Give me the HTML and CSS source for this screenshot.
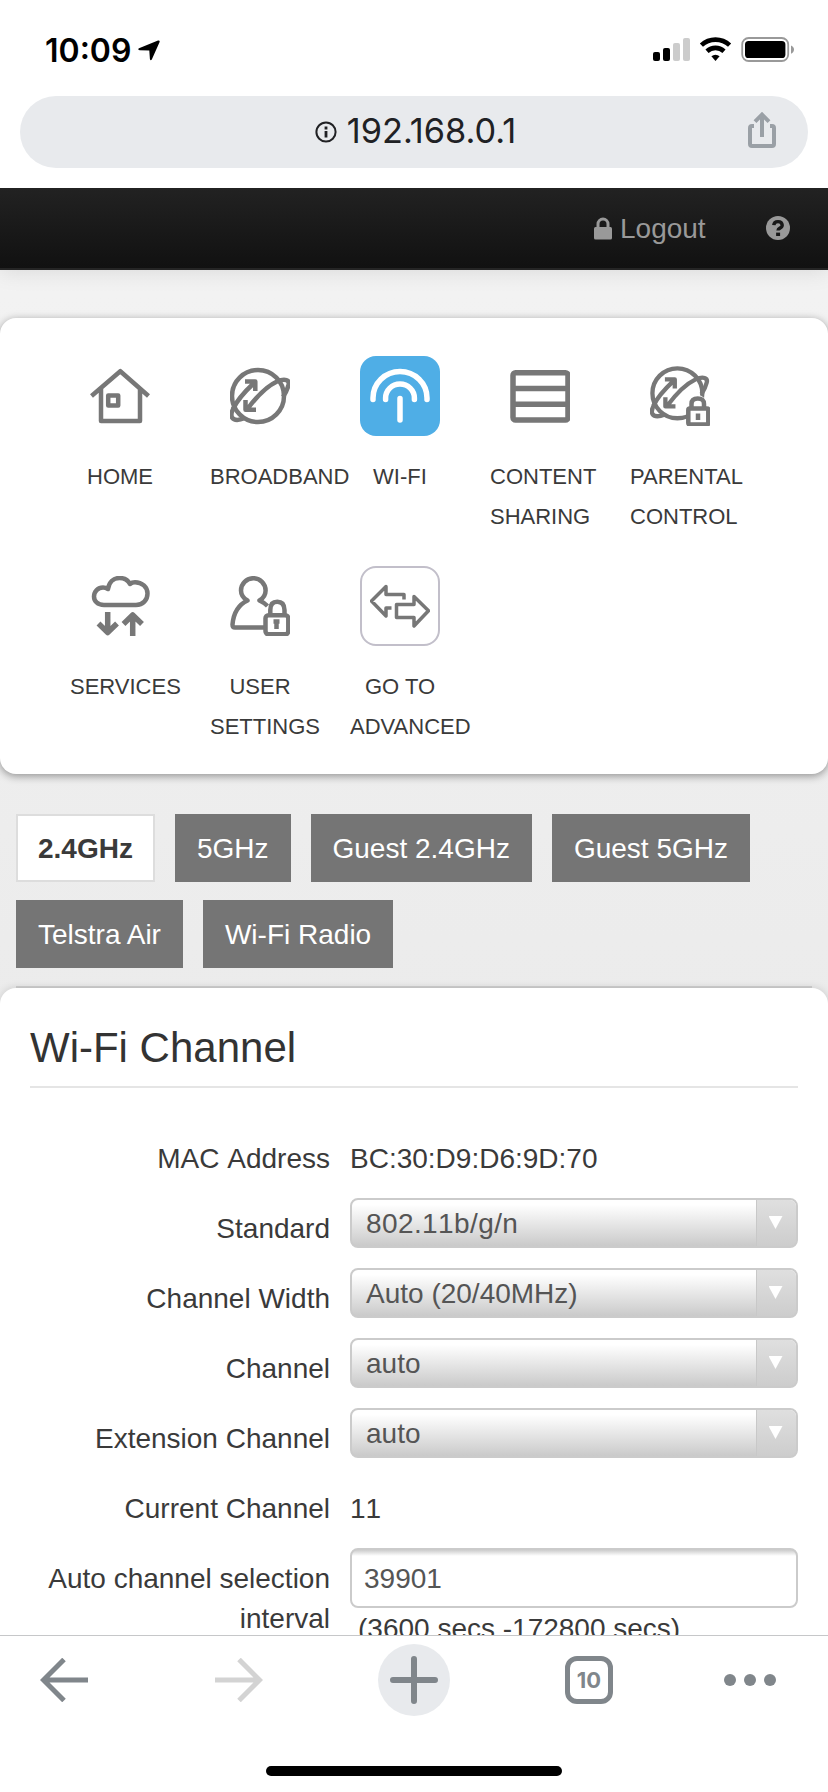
FILE: index.html
```
<!DOCTYPE html>
<html lang="en">
<head>
  <meta charset="UTF-8" />
  <title>Wi-Fi Channel</title>
  <meta name="viewport" content="width=device-width, initial-scale=1.0" />
  <link rel="stylesheet" href="styles.css">
</head>
<body>

  <header class="browser-top">
    <div class="status">
      <span class="time">10:09</span>
      <svg class="location" width="22" height="21" viewBox="0 0 22 21"><path d="M1 8.2 20 .5Q22.200 .1 21.500 2.200L13.800 19.400Q12.500 21.200 11.900 19L11.300 10.400 1.600 10.200Q-.8 9.400 1 8.200Z" /></svg>
      <svg class="signal" width="142" height="26" viewBox="0 0 142 26">
        <rect x="0" y="15" width="7" height="9" rx="2" />
        <rect x="10" y="11" width="7" height="13" rx="2" />
        <rect x="20" y="6" width="7" height="18" rx="2" fill="#ccc" />
        <rect x="30" y="1" width="7" height="23" rx="2" fill="#ccc" />
        <g fill="none" stroke="#000" stroke-width="4.6">
          <path d="M48.400 8.200a20.500 20.500 0 0 1 28.200 0" />
          <path d="M54 14.200a12.500 12.500 0 0 1 17 0" />
        </g>
        <path d="M58.400 19.200a6.200 6.200 0 0 1 8.200 0L62.500 24Z" />
        <rect x="89.200" y="1" width="46" height="23" rx="6.500" fill="none" stroke="#999" stroke-width="1.8" />
        <rect x="92" y="4" width="40.400" height="17" rx="3.600" />
        <path d="M138 8.400q3 1.300 3 4.200t-3 4.200Z" fill="#999" />
      </svg>
    </div>
    <div class="address">
      <span></span>
      <span class="url">
        <svg width="22" height="22" viewBox="0 0 22 22">
          <circle cx="11" cy="11" r="9.600" fill="none" stroke="#202124" stroke-width="2" />
          <path d="M9.600 10h2.800v6.400H9.600ZM9.600 5.600h2.800v2.800H9.600Z" fill="#202124" />
        </svg>
        <span>192.168.0.1</span>
      </span>
      <svg class="share" width="28" height="36" viewBox="0 0 28 36">
        <path d="M6 14H4Q2 14 2 16V32Q2 34 4 34H24Q26 34 26 32V16Q26 14 24 14H22M14 25V4M7 9.600 14 2.600 21 9.600" />
      </svg>
    </div>
  </header>

  <main>
    <div class="topbar">
      <svg width="18" height="23" viewBox="0 0 18 23">
        <path d="M4 11V7a5 5 0 0 1 10 0v4" fill="none" stroke="#999" stroke-width="3" />
        <rect x="0" y="10" width="18" height="12.400" rx="1.500" fill="#999" />
      </svg>
      <a class="logout">Logout</a>
      <svg class="help" width="24" height="24" viewBox="0 0 24 24">
        <circle cx="12" cy="12" r="12" fill="#999" />
        <path d="M7.800 9.200Q8 5.600 12 5.600T16.200 9.200Q16.200 11 13.900 12.100 12 13 12 14.600" fill="none" stroke="#181818" stroke-width="3.400" />
        <path d="M10.100 16.600h4v3.400h-4Z" fill="#181818" />
      </svg>
    </div>

    <nav class="menu">
      <a class="item">
        <span class="icon"><svg viewBox="0 0 60 60">
          <path d="M1.500 30 30.300 5.200 58.500 30M11 23V55H50V23" />
          <rect x="18.200" y="29.600" width="10" height="10" />
        </svg></span>
        Home
      </a>
      <a class="item">
        <span class="icon"><svg viewBox="0 0 60 60">
          <use href="#globe" />
        </svg></span>
        Broadband
      </a>
      <a class="item">
        <span class="icon active"><svg viewBox="0 0 60 60">
          <path d="M3 33.500V32A27 26.500 0 0 1 57 32V33.500M15.600 33.500V32A14.400 14 0 0 1 44.400 32V33.500M30 32.500V54" />
        </svg></span>
        Wi-Fi
      </a>
      <a class="item">
        <span class="icon"><svg viewBox="0 0 60 60">
          <rect class="thick" x="3" y="6.800" width="55" height="47.200" rx="2.500" />
          <path class="thick" d="M3 22.600H58M3 38.200H58" />
        </svg></span>
        Content Sharing
      </a>
      <a class="item">
        <span class="icon"><svg viewBox="0 0 60 60">
          <use href="#globe" transform="translate(.5 -1.500) scale(.96)" />
          <path d="M37 41H41V33Q48 25 55 33V41H60V60H37Z" fill="#fff" stroke="none" />
          <path d="M41.500 42V38Q41.500 32.500 47.800 32.500T54 38V42" />
          <rect x="38.300" y="42.400" width="20" height="16" rx="1.500" />
          <path d="M48 47.500V54" />
        </svg></span>
        Parental Control
      </a>
      <a class="item">
        <span class="icon"><svg viewBox="0 0 60 60">
          <path d="M14 29C7.500 29 4 25 4 20.500 4 15.500 8 11.500 13 11.500Q15.500 11.500 18 13C19 6 23.500 2 29.500 2Q37 2 40 8Q42 6.200 45 6.200C52 6.200 57.500 11 57.500 17.500S53 29 46 29Z" />
          <path class="thick" d="M17.700 36V56M8.500 47.500 17.700 56.500 27 47.500M42.700 60V40M33.500 48 42.700 39 52 48" />
        </svg></span>
        Services
      </a>
      <a class="item">
        <span class="icon"><svg viewBox="0 0 60 60">
          <path d="M36 51.500H5Q2.500 51.500 2.500 48.500C3.500 37 8 29 17.500 24.500 13 22 11 18.500 11 14.500A12.300 12.300 0 0 1 35.600 14.500C35.600 18.500 33.500 22 29.500 24.500Q34 26.500 37.500 30" />
          <path d="M38 38V31Q39 25 47 25T56 31V38Z" fill="#fff" stroke="none" />
          <path d="M40.300 38V34Q40.300 25.800 47.300 25.800T54.500 34V38" />
          <rect x="35.500" y="39.300" width="22.800" height="18.900" rx="3" fill="#fff" />
          <path d="M46.500 44V53M43.500 45.500H49.500" />
        </svg></span>
        User Settings
      </a>
      <a class="item">
        <span class="icon outlined"><svg viewBox="0 0 60 60">
          <path class="thin" d="M34 23.500V18.500H16V10.500L1.500 25 16 40V32H21.500M26.500 28.500H44V20.500L58.500 34.700 44 50V41.500H26.500Z" />
        </svg></span>
        Go to Advanced
      </a>
    </nav>

    <ul class="tabs">
      <li class="current">2.4GHz</li>
      <li>5GHz</li>
      <li>Guest 2.4GHz</li>
      <li>Guest 5GHz</li>
      <li>Telstra Air</li>
      <li>Wi-Fi Radio</li>
    </ul>
    <div class="tabs-line"></div>

    <section class="panel">
      <h2>Wi-Fi Channel</h2>
      <dl>
        <dt>MAC Address</dt>
        <dd class="plain">BC:30:D9:D6:9D:70</dd>
        <dt>Standard</dt>
        <dd><div class="select standard">802.11b/g/n<i></i></div></dd>
        <dt>Channel Width</dt>
        <dd><div class="select">Auto (20/40MHz)<i></i></div></dd>
        <dt>Channel</dt>
        <dd><div class="select">auto<i></i></div></dd>
        <dt>Extension Channel</dt>
        <dd><div class="select">auto<i></i></div></dd>
        <dt>Current Channel</dt>
        <dd class="plain">11</dd>
        <dt>Auto channel selection interval</dt>
        <dd>
          <div class="input">39901</div>
          <div class="hint">(3600 secs -172800 secs)</div>
        </dd>
      </dl>
    </section>
  </main>

  <footer class="browser-bottom">
    <div class="tools">
      <svg width="48" height="44" viewBox="0 0 48 44"><path d="M48 22H4M24 1.500 3.500 22 24 42.500" fill="none" stroke="#80868b" stroke-width="5" /></svg>
      <svg width="48" height="44" viewBox="0 0 48 44"><path d="M0 22H44M24 1.500 44.500 22 24 42.500" fill="none" stroke="#d3d3d3" stroke-width="5" /></svg>
      <svg width="72" height="72" viewBox="0 0 72 72">
        <circle cx="36" cy="36" r="36" fill="#e8eaed" />
        <path d="M15 36H57M36 15V57" stroke="#80868b" stroke-width="6" stroke-linecap="round" />
      </svg>
      <span class="count">10</span>
      <svg width="52" height="12" viewBox="0 0 52 12" fill="#80868b"><circle cx="6" cy="6" r="6" /><circle cx="26" cy="6" r="6" /><circle cx="46" cy="6" r="6" /></svg>
    </div>
    <div class="home-bar"></div>
  </footer>

  <!-- shared by Broadband and Parental Control -->
  <svg class="defs" width="0" height="0">
    <defs>
      <g id="globe">
        <circle cx="28" cy="30" r="26" />
        <path d="M3 43Q8 32 24 17M15 15.500H25.300V25" />
        <path d="M17 43.500Q33 22 47 15.500C55 12 60 14 58.500 19Q57 25 53 31M15.500 34V43.700H26" />
        <path d="M5 40Q0 47 2 51.500 5 56 15 52" />
      </g>
    </defs>
  </svg>

</body>
</html>
```
FILE: styles.css
```
* {
  box-sizing: border-box;
}

body {
  display: flex;
  flex-direction: column;
  height: 1792px;
  margin: 0;
  overflow: hidden;
  background: #fff;
  color: #3a3a3a;
  font: 28px/40px "Liberation Sans", Arial, sans-serif;
}

svg {
  display: block;
  flex: none;
}

.defs {
  position: absolute;
}

/* browser */
.browser-top {
  height: 188px;
  flex: none;
}

.status {
  display: flex;
  align-items: center;
  height: 96px;
  padding: 4px 33px 0 45px;
  color: #000;
}

.time {
  padding-top: 1px;
  font: 600 32px/40px Inter, sans-serif;
}

.location {
  margin-left: 7px;
}

.signal {
  margin-left: auto;
}

.address {
  display: grid;
  grid-template-columns: 60px 1fr 60px;
  align-items: center;
  height: 72px;
  margin: 0 20px;
  border-radius: 36px;
  background: #e8eaed;
}

.url {
  display: flex;
  justify-content: center;
  align-items: center;
  gap: 10px;
  padding-left: 3px;
  color: #202124;
  font: 400 34.300px/40px Inter, sans-serif;

  span {
    padding-bottom: 2px;
  }
}

.share {
  margin-bottom: 5px;
  fill: none;
  stroke: #9aa0a6;
  stroke-width: 4;
}

.browser-bottom {
  flex: none;
  height: 157px;
  border-top: 1px solid #c6c7c9;
  background: #fff;
}

.tools {
  display: grid;
  grid-template-columns: 128px 222px 128px 222px 100px;
  justify-items: center;
  align-items: center;
  height: 88px;
}

.count {
  width: 48px;
  height: 48px;
  border: 5px solid #80868b;
  border-radius: 12px;
  color: #80868b;
  font: 700 22px/38px Inter, sans-serif;
  text-align: center;
}

.home-bar {
  width: 296px;
  height: 10px;
  margin: 42px auto 0;
  border-radius: 5px;
  background: #000;
}

/* router page */
main {
  flex: 1;
  min-height: 0;
  overflow: hidden;
  background: linear-gradient(#f3f3f3, #ececec 750px, #e8e8e8);
}

.topbar {
  display: flex;
  align-items: center;
  height: 82px;
  padding: 0 38px 0 594px;
  border-bottom: 2px solid #252525;
  background: linear-gradient(#222, #111);
  box-shadow: 0 2px 20px rgba(0, 0, 0, .1);
  color: #999;
}

.logout {
  margin-left: 8px;
  padding-top: 1px;
}

.help {
  margin-left: auto;
}

.menu {
  display: grid;
  grid-template-columns: repeat(5, 100px);
  grid-auto-rows: 210px;
  column-gap: 40px;
  height: 456px;
  margin-top: 48px;
  padding: 38px 70px 0;
  border-radius: 16px;
  background: #fff;
  box-shadow: 0 2px 8px rgba(0, 0, 0, .4);
}

.item {
  font-size: 22px;
  text-align: center;
  text-transform: uppercase;
}

.icon {
  display: block;
  width: 80px;
  height: 80px;
  margin: 0 auto 21px;
  padding: 10px;
  border-radius: 16px;

  svg {
    width: 60px;
    height: 60px;
    fill: none;
    stroke: #777;
    stroke-width: 4.500;
    stroke-linejoin: round;
  }

  .thick { stroke-width: 5.500; }
  .thin { stroke-width: 3.500; }

  &.active {
    background: #4faee6;

    svg {
      stroke: #fff;
      stroke-width: 5.500;
      stroke-linecap: round;
    }
  }

  &.outlined {
    padding: 8px;
    border: 2px solid #c2bfca;
  }
}

.tabs {
  display: flex;
  flex-wrap: wrap;
  gap: 18px 20px;
  margin: 40px 16px 0;
  padding: 0;
  list-style: none;

  li {
    padding: 15px 22px 13px;
    background: #757575;
    color: #fff;
  }

  .current {
    padding: 13px 20px 11px;
    border: 2px solid #ddd;
    background: #fff;
    color: #3a3a3a;
    font-weight: bold;
  }
}

.tabs-line {
  height: 2px;
  margin: 18px 16px 0;
  background: #d0d0d0;
}

.panel {
  height: 700px;
  padding: 0 30px;
  border-radius: 16px;
  background: #fff;
  box-shadow: 0 0 8px rgba(0, 0, 0, .15);

  h2 {
    height: 100px;
    margin: 0;
    padding-top: 30px;
    border-bottom: 2px solid #e5e5e5;
    color: #333;
    font-weight: 400;
    font-size: 42px;
    line-height: 60px;
  }
}

dl {
  display: grid;
  grid-template-columns: 300px 448px;
  grid-auto-rows: 70px;
  column-gap: 20px;
  margin: 0;
  padding-top: 40px;
  font-kerning: none;
}

dt {
  padding-top: 11px;
  text-align: right;
}

dd {
  margin: 0;
}

.plain {
  padding-top: 11px;
}

.select {
  display: flex;
  height: 50px;
  padding-left: 14px;
  overflow: hidden;
  border: 2px solid #cbcbcb;
  border-radius: 8px;
  background: linear-gradient(#fff 10%, #cacaca);
  color: #555;
  line-height: 47px;

  i {
    display: flex;
    justify-content: center;
    width: 40px;
    margin-left: auto;
    padding-top: 16px;
    border-left: 1px solid #c8c8c8;
    background: linear-gradient(#dfdfdf, #cdcdcd);
  }

  i::before {
    content: "";
    width: 14px;
    height: 13px;
    margin-right: 2px;
    background: #fff;
    clip-path: polygon(0 0, 100% 0, 50% 100%);
  }
}

.standard {
  letter-spacing: .4px;
}

.input {
  height: 60px;
  padding: 9px 12px;
  border: 2px solid #cbcbcb;
  border-radius: 8px;
  background: linear-gradient(#ccc, #fff 6px);
  color: #555;
}

.hint {
  padding: 1px 0 0 8px;
}
```
